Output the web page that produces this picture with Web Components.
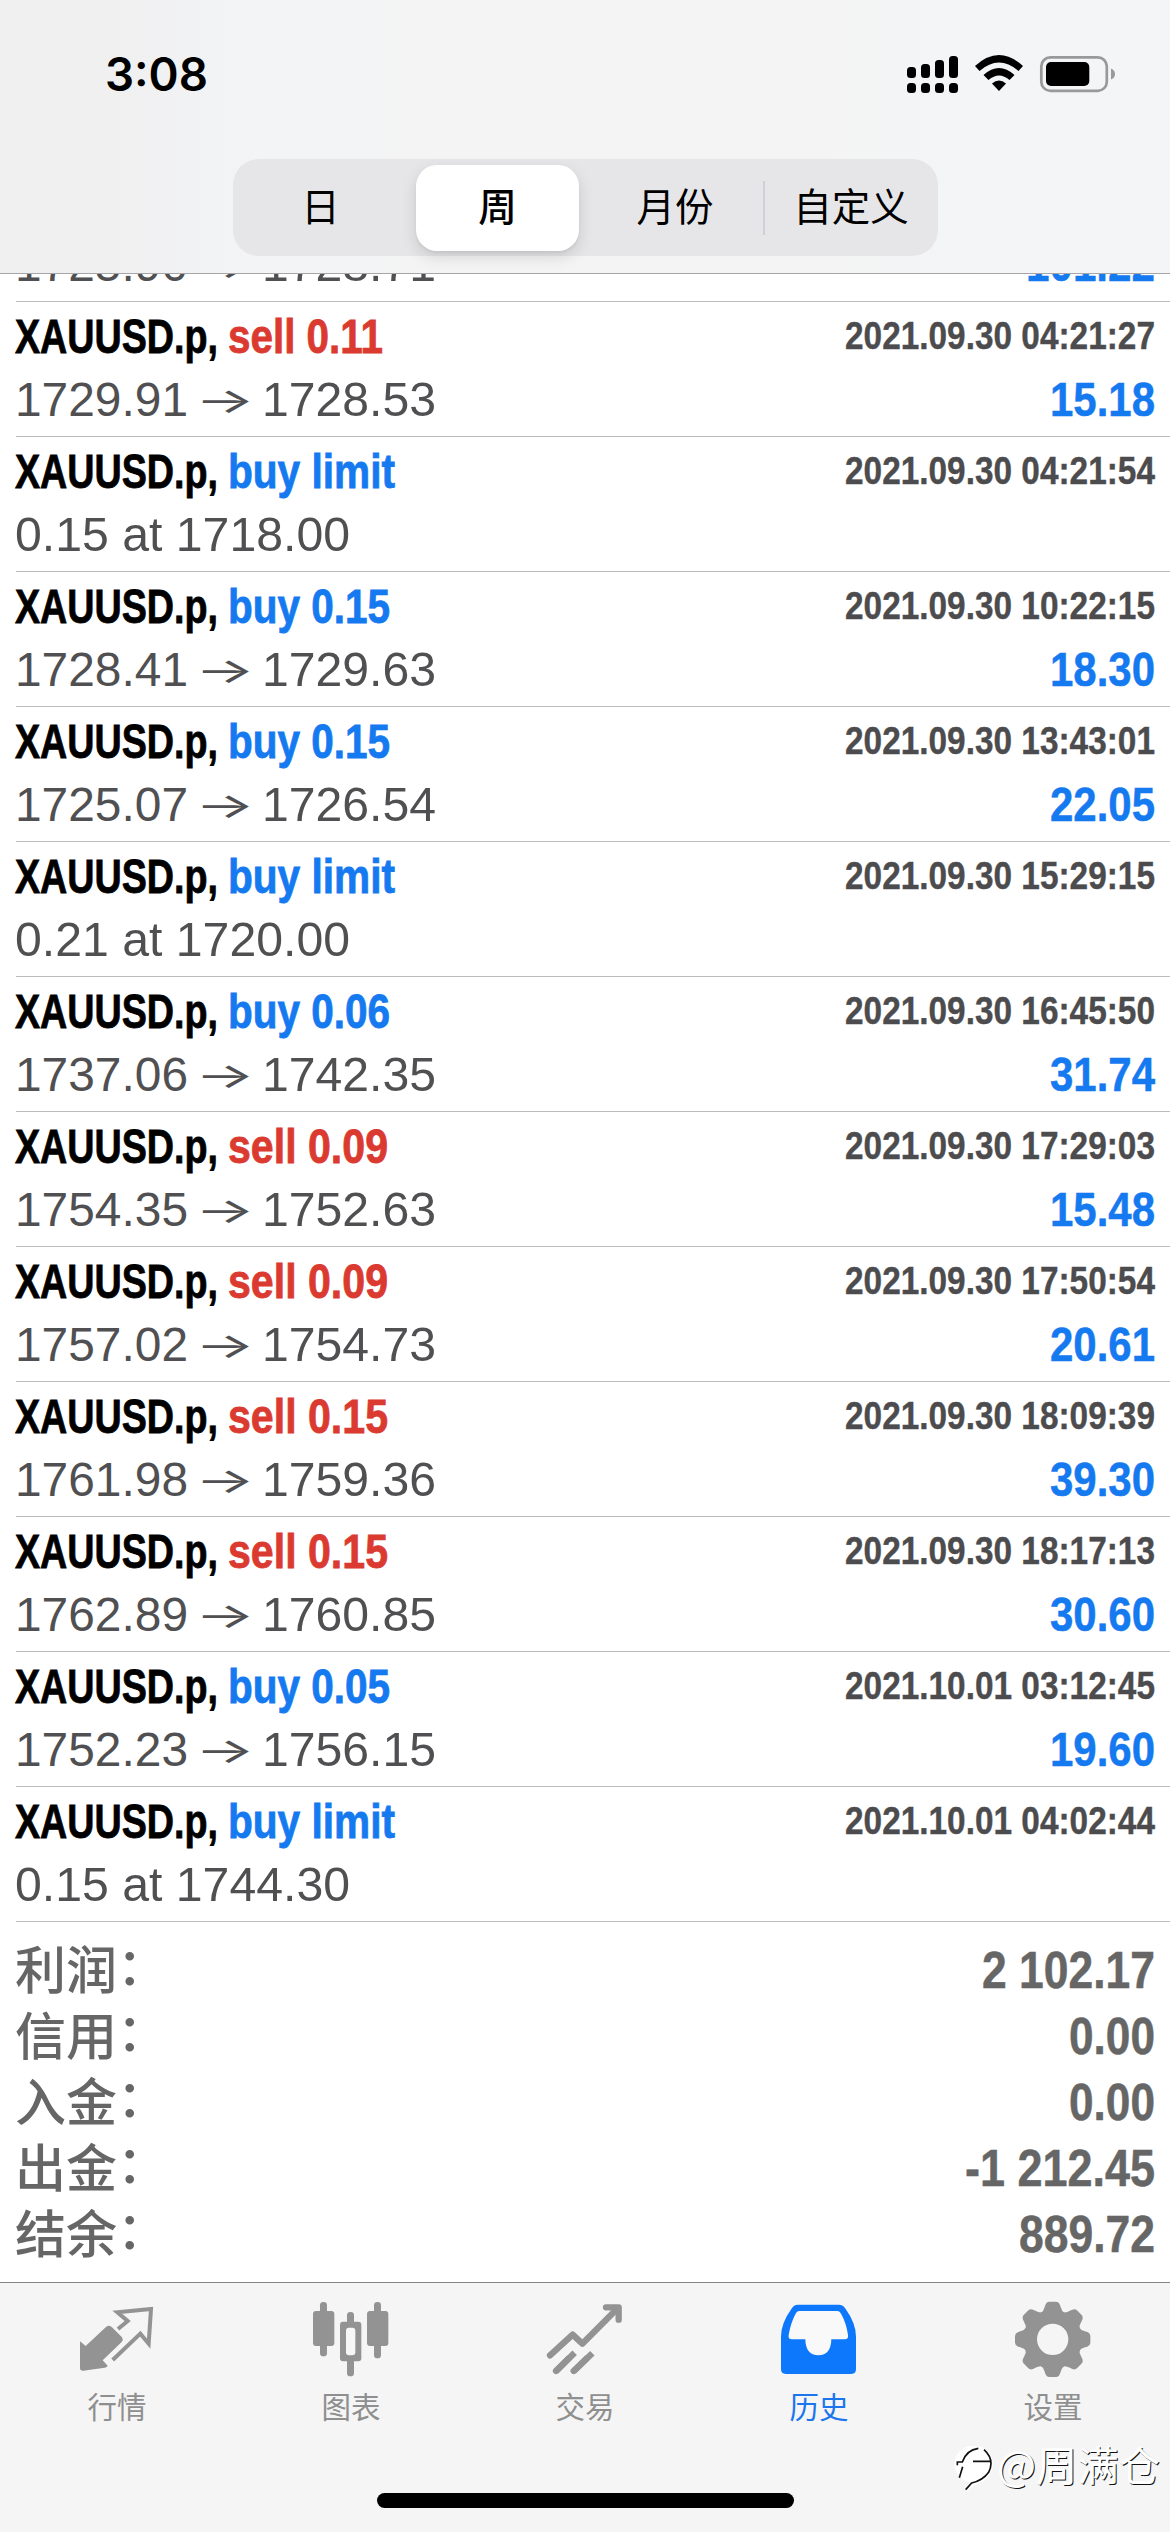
<!DOCTYPE html>
<html lang="zh-CN">
<head>
<meta charset="utf-8">
<title>历史</title>
<style>
html,body{margin:0;padding:0;background:#fff}
body{width:1170px;height:2532px;overflow:hidden;font-family:"Liberation Sans","Noto Sans CJK SC",sans-serif}
</style>
</head>
<body>
<history-screen></history-screen>
<script>
const shadow=(el,html)=>{el.attachShadow({mode:'open'}).innerHTML=html;return el.shadowRoot};

/* Text squeezed or stretched horizontally to a given width */
class FitText extends HTMLElement{
  connectedCallback(){
    const w=+this.getAttribute('w');
    const r=shadow(this,`<style>:host{display:block;flex:none;width:${w}px;white-space:pre}span{display:inline-block;transform-origin:0 50%}</style><span><slot></slot></span>`);
    const s=r.querySelector('span');
    s.style.transform=`scaleX(${w/s.getBoundingClientRect().width})`;
  }
}

class StatusBar extends HTMLElement{
  connectedCallback(){
    shadow(this,`<style>
    :host{display:flex;height:159px;box-sizing:border-box;padding:46px 52px 0 105px;justify-content:space-between;align-items:flex-start}
    .time{font:600 46px/56px Inter,sans-serif;color:#000}
    svg{display:block}
    </style>
    <fit-text class="time" w="103">3:08</fit-text>
    <svg width="216" height="60" viewBox="902 46 216 60">
      <g><rect x="907" y="67" width="9" height="11" rx="3.5"/><rect x="921" y="64" width="9" height="14" rx="3.5"/><rect x="935" y="60" width="9" height="18" rx="3.5"/><rect x="949" y="56" width="9" height="22" rx="3.5"/>
      <rect x="907" y="83" width="9" height="10" rx="3.5"/><rect x="921" y="83" width="9" height="10" rx="3.5"/><rect x="935" y="83" width="9" height="10" rx="3.5"/><rect x="949" y="83" width="9" height="10" rx="3.5"/></g>
      <path d="M975 66Q999 44 1023 66L1018.500 71Q999 54 979.500 71Z"/>
      <path d="M983.500 75Q999 61 1014.500 75L1009.500 80Q999 71 988.500 80Z"/>
      <path d="M992 83.500Q999 77.500 1006 83.500L999 91Z"/>
      <rect x="1041.300" y="57.300" width="65.500" height="33.500" rx="9" fill="none" stroke="#999" stroke-width="2.700"/>
      <rect x="1046" y="62" width="43.300" height="24" rx="5"/>
      <path d="M1111 68.500q4 1.500 4 5.500t-4 5.500z" fill="#999"/>
    </svg>`);
  }
}

class SegmentItem extends HTMLElement{
  connectedCallback(){
    shadow(this,`<style>
    :host{display:flex;box-sizing:border-box;align-items:center;justify-content:center;height:86px;padding-bottom:7px;border-radius:21px;color:#000;font:400 38.500px/50px "Noto Sans CJK SC",sans-serif}
    :host([selected]){background:#fff;font-weight:500;box-shadow:0 6px 16px rgba(0,0,0,.13),0 2px 3px rgba(0,0,0,.05)}
    </style><slot></slot>`);
  }
}
class SegmentedControl extends HTMLElement{
  connectedCallback(){
    shadow(this,`<style>
    :host{display:flex;width:705px;height:97px;box-sizing:border-box;border-radius:26px;background:#e6e6e8;align-items:center;padding:0 0 0 6px}
    segment-item{width:163px}.wk{width:163px;margin-left:14px}.mo{width:168px;margin-left:12px;margin-right:4px}.cu{width:172px}
    i{width:2px;height:54px;background:#d0d0d4}
    </style>
    <segment-item>日</segment-item><segment-item class="wk" selected>周</segment-item><segment-item class="mo">月份</segment-item><i></i><segment-item class="cu">自定义</segment-item>`);
  }
}

class NavHeader extends HTMLElement{
  connectedCallback(){
    shadow(this,`<style>
    :host{display:flex;flex-direction:column;height:274px;box-sizing:border-box;border-bottom:1.500px solid #a6a6a8;background:linear-gradient(90deg,#f0f0f0 0,#f0f0f1 120px,#f3f4f6 260px,#f4f4f4 480px,#f4f4f4 820px,#f3f5f7 1000px,#f3f5f7)}
    segmented-control{margin-left:233px}
    </style><status-bar></status-bar><segmented-control></segmented-control>`);
  }
}

class DealRow extends HTMLElement{
  connectedCallback(){
    const [op,time,detail,profit]=this.deal;
    const w=op==='buy limit'?167:op==='sell 0.11'?155:op.startsWith('sell')?160:162;
    const parts=detail.split(' → ');
    const info=parts.length===2
      ?`<fit-text w="173">${parts[0]}</fit-text><fit-text class="ar" w="60">→</fit-text><fit-text w="174">${parts[1]}</fit-text>`
      :`<fit-text w="335">${detail}</fit-text>`;
    const title=op?`<fit-text class="sy" w="203">XAUUSD.p,</fit-text><fit-text class="op" w="${w}">${op}</fit-text><fit-text class="tm" w="310">${time}</fit-text>`:'';
    shadow(this,`<style>
    :host{display:block;flex:none;height:135px;box-sizing:border-box;padding-left:16px}
    .in{height:134px;border-bottom:1px solid #bcbcbe;padding-right:15px}
    .l{display:flex}
    .t{height:68px;font:700 48px/69px "Liberation Sans",sans-serif;color:#000}
    .sy{margin-left:-1px}
    .sy,.op{-webkit-text-stroke:.8px currentColor}
    .op{margin-left:10px;color:${op.startsWith('sell')?'#db3a30':'#1579f0'}}
    .tm{margin-left:auto;font-size:39.500px;line-height:67px;color:#4c4c4e;-webkit-text-stroke:.4px currentColor}
    .d{height:59px;margin-left:-1px;font:400 48px/59px "Liberation Sans",sans-serif;color:#505052}
    .ar{margin:0 7px;font-family:Inter,sans-serif;font-size:35px;line-height:60px;font-weight:400}
    .p{margin-left:auto;font-weight:700;color:#1579f0;-webkit-text-stroke:.5px currentColor}
    </style><div class="in">
    <div class="l t">${title}</div>
    <div class="l d">${info}${profit?`<fit-text class="p" w="${profit.length>5?129:105}">${profit}</fit-text>`:''}</div></div>`);
  }
}

class DealList extends HTMLElement{
  connectedCallback(){
    const rows=[
      ['','','1725.90 → 1728.71','101.22'],
      ['sell 0.11','2021.09.30 04:21:27','1729.91 → 1728.53','15.18'],
      ['buy limit','2021.09.30 04:21:54','0.15 at 1718.00'],
      ['buy 0.15','2021.09.30 10:22:15','1728.41 → 1729.63','18.30'],
      ['buy 0.15','2021.09.30 13:43:01','1725.07 → 1726.54','22.05'],
      ['buy limit','2021.09.30 15:29:15','0.21 at 1720.00'],
      ['buy 0.06','2021.09.30 16:45:50','1737.06 → 1742.35','31.74'],
      ['sell 0.09','2021.09.30 17:29:03','1754.35 → 1752.63','15.48'],
      ['sell 0.09','2021.09.30 17:50:54','1757.02 → 1754.73','20.61'],
      ['sell 0.15','2021.09.30 18:09:39','1761.98 → 1759.36','39.30'],
      ['sell 0.15','2021.09.30 18:17:13','1762.89 → 1760.85','30.60'],
      ['buy 0.05','2021.10.01 03:12:45','1752.23 → 1756.15','19.60'],
      ['buy limit','2021.10.01 04:02:44','0.15 at 1744.30']];
    const r=shadow(this,`<style>:host{display:flex;flex-direction:column;justify-content:flex-end;height:1648px;overflow:hidden}</style>`);
    for(const d of rows){const e=document.createElement('deal-row');e.deal=d;r.append(e)}
  }
}

class AccountSummary extends HTMLElement{
  connectedCallback(){
    const rows=[['利润','2 102.17',173],['信用','0.00',86],['入金','0.00',86],['出金','-1 212.45',190],['结余','889.72',136]];
    shadow(this,`<style>
    :host{display:flex;flex-direction:column;height:360px;box-sizing:border-box;padding:15px 15px 0 15px;color:#666}
    div{display:flex;justify-content:space-between;height:66px}
    span{font:500 51px/60px "Noto Sans CJK SC",sans-serif}
    b{display:inline-block;font-weight:500;line-height:40px;vertical-align:4px}
    fit-text{font:700 51px/67px "Liberation Sans",sans-serif;-webkit-text-stroke:.5px currentColor}
    </style>`+rows.map(([a,t,w])=>`<div><span>${a}<b>：</b></span><fit-text w="${w}">${t}</fit-text></div>`).join(''));
  }
}

const icons={
 quotes:`<g transform="translate(-12 -26) scale(.33333)"><path fill="#939393" d="M60 214L77 228L138 171Q148 163 156 172L186 202Q191 209 185 216L128 271L143 287Q142 292 134 293L70 302Q60 303 60 294Z"/><path d="M174 177L203 153L172 127L273 117L266 221L241 191L158 270" fill="none" stroke="#939393" stroke-width="12"/></g>`,
 chart:`<g transform="translate(-246 -26) scale(.33333)" fill="#939393"><rect x="780" y="96" width="21" height="163" rx="10"/><rect x="759" y="123" width="64" height="105" rx="9"/><rect x="942" y="96" width="21" height="169" rx="10"/><rect x="921" y="123" width="64" height="105" rx="9"/><rect x="861" y="126" width="21" height="193" rx="10"/><rect x="840" y="155" width="64" height="119" rx="9"/><rect x="858" y="173" width="28" height="83" rx="9" fill="#f7f7f7"/></g>`,
 trade:`<g transform="translate(-20 -26) scale(.33333)" fill="none" stroke="#939393" stroke-width="19" stroke-linecap="round" stroke-linejoin="round"><path d="M90 256L158 194L187 221L290 118"/><path d="M258 112H296V149"/><path d="M108 304L164 248M161 304L217 250" stroke-linecap="butt"/><path d="M108 303L145 266M161 303L199 266"/></g>`,
 history:`<g transform="translate(-254 -26) scale(.33333)"><path fill="#0d78fb" d="M834 104H956Q970 104 977 117Q1008 160 1008 200V298Q1008 312 994 312H797Q783 312 783 298V200Q783 160 814 117Q821 104 834 104Z"/><path fill="#f9f9f9" d="M839 123Q830 123 826 133Q812 160 806 195Q804 208 815 208H856Q857 256 895 256Q933 256 934 208H974Q986 208 984 195Q979 160 964 133Q960 123 951 123Z"/></g>`,
 settings:(()=>{let p='';for(let i=0;i<8;i++)p+=`<path transform="rotate(${i*45})" d="M-36 -79Q-27 -84 -24 -97Q-20 -113 -10 -113H10Q20 -113 24 -97Q27 -84 36 -79Z"/>`;return `<g transform="translate(44.670 43.330) scale(.33333)" fill="#939393">${p}<circle r="67" fill="none" stroke="#939393" stroke-width="40"/></g>`})()
};
class TabItem extends HTMLElement{
  connectedCallback(){
    shadow(this,`<style>
    :host{display:flex;flex-direction:column;align-items:center;width:234px;padding-top:13px;color:#8f8f8f;font:400 29.500px/40px "Noto Sans CJK SC",sans-serif}
    :host([active]){color:#1b76ee}
    svg{display:block;margin-bottom:3px}
    </style><svg width="90" height="86" viewBox="0 0 90 86">${icons[this.getAttribute('icon')]}</svg><slot></slot>`);
  }
}
class WaterMark extends HTMLElement{
  connectedCallback(){
    shadow(this,`<style>
    :host{position:absolute;right:10px;top:2430px;display:flex;align-items:center;color:#fff;font:400 41px/60px "Noto Sans CJK SC",sans-serif;text-shadow:1px 1px 0 #111}
    svg{display:block;margin:6px 2px 0 0}
    </style><svg width="44" height="60" viewBox="0 0 44 60"><g transform="translate(-51 -168) scale(.33333)" fill="none"><ellipse cx="218" cy="588" rx="55" ry="54" fill="#fff"/><path d="M172 590L184 580Q193 549 219 541Q250 536 267 567Q275 582 272 596Q265 630 235 642Q211 647 198 666" stroke="#fff" stroke-width="12"/><path d="M172 592V582H187Q199 546 235 541M252 545Q285 575 266 613Q248 638 215 645L197 665M219 580H272M188 596L178 629" stroke="#111" stroke-width="5"/></g></svg><fit-text w="163">@周满仓</fit-text>`);
  }
}
class TabBar extends HTMLElement{
  connectedCallback(){
    shadow(this,`<style>
    :host{display:flex;flex-direction:column;align-items:center;height:250px;box-sizing:border-box;border-top:1px solid #85858a;background:#f5f5f5}
    nav{display:flex;height:210px}
    .home{width:417px;height:15px;border-radius:8px;background:#000}
    </style><nav><tab-item icon="quotes">行情</tab-item><tab-item icon="chart">图表</tab-item><tab-item icon="trade">交易</tab-item><tab-item icon="history" active>历史</tab-item><tab-item icon="settings">设置</tab-item></nav><div class="home"></div><water-mark></water-mark>`);
  }
}
class HistoryScreen extends HTMLElement{
  connectedCallback(){
    shadow(this,`<style>:host{display:flex;flex-direction:column;position:relative;width:1170px;height:2532px;overflow:hidden;background:#fff}</style>
    <nav-header></nav-header><deal-list></deal-list><account-summary></account-summary><tab-bar></tab-bar>`);
  }
}
customElements.define('fit-text',FitText);
customElements.define('status-bar',StatusBar);
customElements.define('segment-item',SegmentItem);
customElements.define('segmented-control',SegmentedControl);
customElements.define('nav-header',NavHeader);
customElements.define('deal-row',DealRow);
customElements.define('deal-list',DealList);
customElements.define('account-summary',AccountSummary);
customElements.define('tab-item',TabItem);
customElements.define('water-mark',WaterMark);
customElements.define('tab-bar',TabBar);
customElements.define('history-screen',HistoryScreen);
</script>
</body>
</html>
